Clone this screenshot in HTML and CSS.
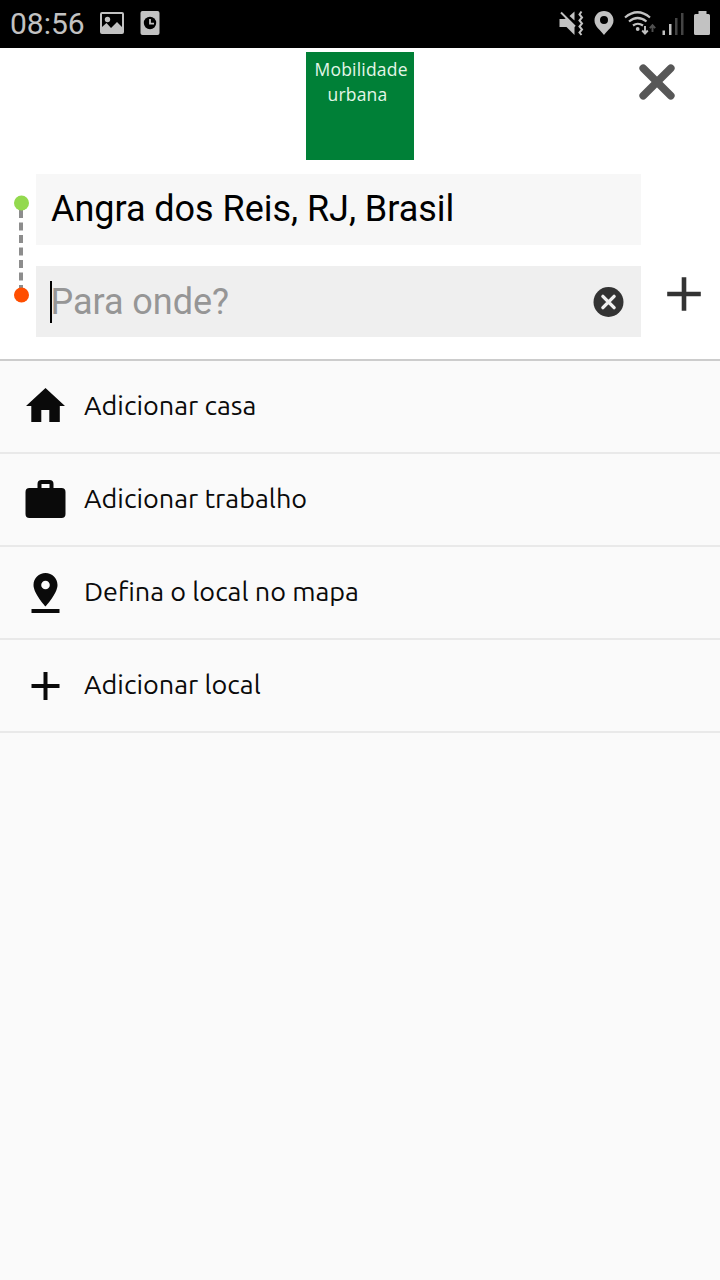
FILE: index.html
```html
<!DOCTYPE html>
<html lang="pt-BR">
<head>
<meta charset="utf-8">
<title>Mobilidade urbana</title>
<link rel="stylesheet" href="styles.css">
</head>
<body>
<div class="status">
  <span class="clock">08:56</span>
  <svg class="status-left" width="70" height="48" viewBox="95 0 70 48" fill="#c2c2c2">
    <path fill-rule="evenodd" d="M102 12h20q2 0 2 2v18q0 2-2 2h-20q-2 0-2-2V14q0-2 2-2zM102 14v13l4.500-4 4.500 5 6-6 5 5V14z"/>
    <circle cx="107.500" cy="19.500" r="2.700"/>
    <rect x="140.500" y="11" width="19" height="24" rx="2"/>
    <circle cx="150" cy="23" r="6.200" fill="#000"/>
    <path d="M150 19v4.700h4" fill="none" stroke="#c2c2c2" stroke-width="1.800"/>
  </svg>
  <svg class="status-right" width="160" height="48" viewBox="555 0 160 48" fill="#c2c2c2">
    <path d="M559.500 19h5l2-1 8 8v9l-8-8h-7zM569.500 16l5-4.500v9z"/>
    <path d="M561 12.500l14 14" fill="none" stroke="#c2c2c2" stroke-width="2"/>
    <path d="M581.500 11.500l-2 3 2.500 3-2.500 3 2.500 3-2.500 3 2.500 3-2.500 3 2 2.500" fill="none" stroke="#c2c2c2" stroke-width="2"/>
    <path fill-rule="evenodd" d="M604 11c-5.500 0-9.500 4.200-9.500 9.500 0 6 6 9.500 9.500 14.500 3.500-5 9.500-8.500 9.500-14.500C613.500 15.200 609.500 11 604 11zm0 5a4 4 0 1 1 0 8 4 4 0 0 1 0-8z"/>
    <g fill="none" stroke="#c2c2c2" stroke-width="2.200">
      <path d="M625 17.500q12.500-10.500 25 0M629 21.500q8.500-7 17.500 0M633 25.500q4.700-3.500 10 0"/>
      <path d="M645 26v7M642.200 30.500l2.800 3 2.800-3" stroke-width="1.900"/>
      <path d="M652.500 32v-6.500M649.800 28.200l2.700-3 2.700 3" stroke="#505050" stroke-width="1.900"/>
    </g>
    <circle cx="637.700" cy="29" r="1.900"/>
    <path d="M662.500 30.500h2.500V35h-2.500zM669 24h2.500v11H669z"/>
    <path d="M675 18h2.500v17H675zM681 13h2.500v22H681z" fill="#444"/>
    <path d="M698.500 11h8v3h2q1.500 0 1.500 1.500v18q0 1.500-1.500 1.500h-13q-1.500 0-1.500-1.500v-18q0-1.500 1.500-1.500h3z"/>
  </svg>
</div>
<header class="search">
  <div class="top">
    <div class="logo"><span class="logo-a">Mobilidade</span><span class="logo-b">urbana</span></div>
    <svg class="close" width="40" height="40" viewBox="0 0 40 40"><path d="M6.200 6.200l27.600 27.600M33.800 6.200L6.200 33.800" stroke="#575757" stroke-width="7.600" stroke-linecap="round"/></svg>
  </div>
  <div class="trip">
    <svg class="rail" width="36" height="163" viewBox="0 174 36 163">
      <path d="M21 210v80" stroke="#8d8d8d" stroke-width="4" stroke-dasharray="8 4.500"/>
      <circle cx="21.500" cy="203" r="7.500" fill="#93d94e"/>
      <circle cx="21.500" cy="295" r="7.500" fill="#ff4e00"/>
    </svg>
    <div class="fields">
      <div class="field from"><span>Angra dos Reis, RJ, Brasil</span></div>
      <div class="field to">
        <i class="caret"></i><span class="placeholder">Para onde?</span>
        <svg class="clear" width="31" height="30" viewBox="0 0 31 30"><circle cx="15.500" cy="15" r="15" fill="#333"/><path d="M9.900 9.400l11.200 11.200M21.100 9.400L9.900 20.600" stroke="#efefef" stroke-width="3.400" stroke-linecap="round"/></svg>
      </div>
    </div>
    <svg class="add" width="34" height="34" viewBox="0 0 34 34"><path d="M17 .2v33.600M.2 17h33.600" stroke="#333" stroke-width="4.600"/></svg>
  </div>
</header>
<main class="list">
  <div class="row"><svg class="icon" width="50" height="50" viewBox="20 381 50 50"><path d="M45.500 388L65 406h-5.200v16h-10.500v-12h-8v12h-10V406H26z"/></svg><span class="label">Adicionar casa</span></div>
  <div class="row"><svg class="icon" width="50" height="50" viewBox="20 474 50 50"><path fill-rule="evenodd" d="M29.500 488h8v-4q0-4 4-4h8q4 0 4 4v4h8q4 0 4 4v22q0 4-4 4h-32q-4 0-4-4v-22q0-4 4-4zM41.500 484v4h8v-4z"/></svg><span class="label">Adicionar trabalho</span></div>
  <div class="row"><svg class="icon" width="50" height="50" viewBox="20 567 50 50"><path fill-rule="evenodd" d="M45.500 573c-6.600 0-12 5.300-12 12 0 8.500 12 21.500 12 21.500s12-13 12-21.500c0-6.700-5.400-12-12-12zm0 7.700a4.300 4.300 0 1 1 0 8.600 4.300 4.300 0 0 1 0-8.600zM31.500 609h28v4h-28z"/></svg><span class="label">Defina o local no mapa</span></div>
  <div class="row"><svg class="icon" width="50" height="50" viewBox="20 660 50 50"><path d="M43.500 672h4v12h12v4h-12v12h-4v-12h-12v-4h12z"/></svg><span class="label">Adicionar local</span></div>
</main>
</body>
</html>
```
FILE: styles.css
```css
* { box-sizing: border-box; }
body { margin: 0; width: 720px; min-height: 1280px; background: #fafafa; font-family: Roboto, sans-serif; }
svg { display: block; flex: none; }
span { white-space: nowrap; }
.status { height: 48px; display: flex; background: #000; color: #c2c2c2; }
.clock { width: 85px; margin-left: 10px; font-size: 30px; line-height: 48px; }
.status-right { margin-left: auto; margin-right: 5px; }
.search { height: 313px; background: #fff; border-bottom: 2px solid #ccc; }
.top { height: 126px; display: grid; grid-template-columns: 306px 108px 1fr; padding-top: 4px; }
.logo { grid-column: 2; height: 108px; background: #008037; color: #e4f6e8; font-family: "Open Sans", "Noto Sans", sans-serif; font-size: 17.5px; line-height: 25px; padding-top: 5px; display: flex; flex-direction: column; }
.logo-a { padding-left: 8.5px; letter-spacing: 0.2px; }
.logo-b { padding-left: 21.5px; letter-spacing: 0.2px; }
.close { margin: 10px 0 0 223px; }
.trip { display: flex; }
.fields { width: 605px; display: flex; flex-direction: column; gap: 21px; }
.field { height: 71px; display: flex; align-items: center; font-size: 36px; line-height: 42px; color: #000; }
.from { padding-left: 15px; background: #f7f7f7; padding-bottom: 2px; letter-spacing: -0.04px; }
.to { padding-left: 14px; padding-right: 17px; background: #efefef; }
.caret { width: 2px; height: 42px; background: #000; }
.placeholder { color: #969696; margin-left: -1.5px; letter-spacing: -0.05px; }
.clear { margin-left: auto; }
.add { margin: 103px 0 0 26px; }
.row { height: 93px; display: flex; align-items: center; padding: 0 0 2px 20px; border-bottom: 2px solid #e9e9e9; color: #0a0a0a; font-family: Ubuntu, "Noto Sans", sans-serif; font-size: 27px; line-height: 36px; }
.label { padding-bottom: 2px; }
.icon { fill: #0a0a0a; margin-right: 14px; }
```
